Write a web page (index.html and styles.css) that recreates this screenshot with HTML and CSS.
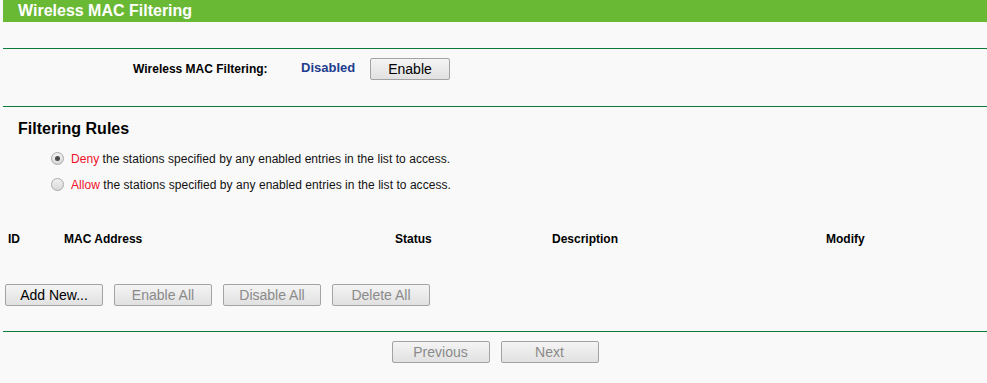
FILE: index.html
```html
<!DOCTYPE html>
<html lang="en">
<head>
  <meta charset="UTF-8">
  <title>Wireless MAC Filtering</title>
  <link rel="stylesheet" href="styles.css">
</head>
<body>
  <div class="page">
    <div class="title">Wireless MAC Filtering</div>

    <div class="section status-row">
      <span class="status-label">Wireless MAC Filtering:</span>
      <span class="status-value">Disabled</span>
      <button class="btn">Enable</button>
    </div>

    <div class="section rules">
      <h2>Filtering Rules</h2>
      <label class="rule">
        <input type="radio" name="rule" checked>
        <span><em>Deny</em> the stations specified by any enabled entries in the list to access.</span>
      </label>
      <label class="rule">
        <input type="radio" name="rule">
        <span><em>Allow</em> the stations specified by any enabled entries in the list to access.</span>
      </label>

      <div class="list-head">
        <span>ID</span>
        <span>MAC Address</span>
        <span>Status</span>
        <span>Description</span>
        <span>Modify</span>
      </div>

      <div class="actions">
        <button class="btn wide">Add New...</button>
        <button class="btn wide" disabled>Enable All</button>
        <button class="btn wide" disabled>Disable All</button>
        <button class="btn wide" disabled>Delete All</button>
      </div>
    </div>

    <div class="section pager">
      <button class="btn wide" disabled>Previous</button>
      <button class="btn wide" disabled>Next</button>
    </div>
  </div>
</body>
</html>
```

FILE: styles.css
```css
body {
  margin: 0;
  background-color: #f9f9f9;
  font-family: "Liberation Sans", Arial, sans-serif;
  font-size: 12px;
  color: #000;
}
.page {
  margin-left: 3px;
}
.title {
  height: 22px;
  line-height: 21px;
  padding-left: 15px;
  background-color: #6ab934;
  color: #fff;
  font-size: 16px;
  font-weight: bold;
}
.section {
  border-top: 1px solid #0b7a3b;
  box-shadow: 0 1px 0 #d6e8da;
}
.status-row {
  margin-top: 26px;
  height: 58px;
  display: flex;
  align-items: center;
  padding-left: 130px;
  box-sizing: border-box;
  padding-bottom: 18px;
}
.status-label {
  font-weight: bold;
  width: 168px;
}
.status-value {
  font-weight: bold;
  font-size: 13px;
  color: #1d3d8f;
  width: 69px;
  margin-top: -3px;
}
.btn {
  height: 22px;
  width: 80px;
  padding: 0;
  border: 1px solid #a3a3a3;
  border-radius: 2px;
  background: linear-gradient(#f4f4f4, #e1e1e1);
  font-family: "Liberation Sans", Arial, sans-serif;
  font-size: 14px;
  color: #000;
}
.btn.wide {
  width: 98px;
}
.btn:disabled {
  color: #8a8a8a;
}
.rules h2 {
  margin: 0;
  padding: 12px 0 0 15px;
  font-size: 16px;
  line-height: 20px;
}
.rule {
  display: flex;
  align-items: center;
  padding-left: 47px;
  height: 13px;
  margin-top: 13px;
}
.rule + .rule {
  margin-top: 13px;
}
.rule input {
  appearance: none;
  margin: 0 7px 0 1px;
  width: 13px;
  height: 13px;
  border: 1px solid #a8a8a8;
  border-radius: 50%;
  background: linear-gradient(#f2f2f2, #d8d8d8);
  box-sizing: border-box;
  position: relative;
}
.rule input:checked::after {
  content: "";
  position: absolute;
  left: 3px;
  top: 3px;
  width: 5px;
  height: 5px;
  border-radius: 50%;
  background: #4a4a4a;
}
.rule span {
  color: #111;
  letter-spacing: 0.05px;
}
.rule em {
  font-style: normal;
  color: #f0102a;
}
.list-head {
  display: grid;
  grid-template-columns: 56px 331px 157px 274px 1fr;
  padding-left: 5px;
  margin-top: 41px;
  font-weight: bold;
  line-height: 14px;
}
.actions {
  display: flex;
  gap: 11px;
  padding-left: 2px;
  margin-top: 38px;
  padding-bottom: 25px;
}
.pager {
  display: flex;
  justify-content: center;
  gap: 11px;
  padding-top: 9px;
  height: 60px;
  box-sizing: border-box;
  box-shadow: none;
}
```
